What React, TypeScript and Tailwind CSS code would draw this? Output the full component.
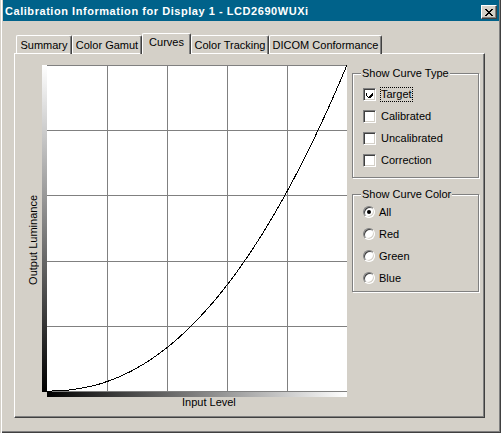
import React from 'react';

const TABS = [
  { label: 'Summary', w: 'w-[56px]' },
  { label: 'Color Gamut', w: 'w-[70px]' },
  { label: 'Curves', w: 'w-[49px]', active: true },
  { label: 'Color Tracking', w: 'w-[78px]' },
  { label: 'DICOM Conformance', w: 'w-[113px]' },
];

const CURVE_TYPES = ['Target', 'Calibrated', 'Uncalibrated', 'Correction'];
const CURVE_COLORS = ['All', 'Red', 'Green', 'Blue'];

// plot geometry inside the svg (gradient bars on left and bottom)
const PX = 5;
const PW = 300;
const PH = 326;

function curvePoints() {
  const pts: string[] = [];
  for (let i = 0; i <= 120; i++) {
    const t = i / 120;
    const x = PX + PW * t;
    const y = PH - PH * Math.pow(t, 2.2);
    pts.push(`${x.toFixed(1)},${y.toFixed(1)}`);
  }
  return pts.join(' ');
}

function Chart() {
  const cols = [1, 2, 3, 4].map((i) => PX + i * 60 + 0.5);
  const rows = [0, 1, 2, 3, 4, 5].map((i) => i * 65.2 + 0.5);
  return (
    <svg width={306} height={333} className="block">
      <defs>
        <linearGradient id="vgrad" x1="0" y1="0" x2="0" y2="1">
          <stop offset="0" stopColor="#ffffff" />
          <stop offset="1" stopColor="#000000" />
        </linearGradient>
        <linearGradient id="hgrad" x1="0" y1="0" x2="1" y2="0">
          <stop offset="0" stopColor="#000000" />
          <stop offset="1" stopColor="#ffffff" />
        </linearGradient>
      </defs>
      <rect x={0} y={0} width={PX} height={PH + 1} fill="url(#vgrad)" />
      <rect x={PX} y={0} width={PW} height={PH} fill="#ffffff" />
      <rect x={PX} y={PH} width={PW} height={6} fill="url(#hgrad)" />
      <g stroke="#808080" strokeWidth={1} shapeRendering="crispEdges">
        {cols.map((x) => (
          <line key={x} x1={x} y1={0} x2={x} y2={PH} />
        ))}
        {rows.map((y) => (
          <line key={y} x1={PX} y1={y} x2={PX + PW} y2={y} />
        ))}
      </g>
      <polyline points={curvePoints()} fill="none" stroke="#000" strokeWidth={1} shapeRendering="crispEdges" />
    </svg>
  );
}

function Group({ title, className, children }: { title: string; className: string; children: React.ReactNode }) {
  return (
    <div className={`relative w-[127px] border border-[#808080] shadow-[inset_1px_1px_0_#fff,1px_1px_0_#fff] ${className}`}>
      <span className="absolute -top-[7px] left-[8px] bg-[#d4d0c8] px-[1px] leading-[13px]">{title}</span>
      {children}
    </div>
  );
}

function Checkbox({ checked }: { checked?: boolean }) {
  return (
    <div className="flex h-[13px] w-[13px] items-center justify-center border border-t-[#808080] border-l-[#808080] border-r-white border-b-white bg-white shadow-[inset_1px_1px_0_#404040,inset_-1px_-1px_0_#d4d0c8]">
      {checked && (
        <svg width={7} height={7} viewBox="0 0 7 7" shapeRendering="crispEdges">
          <path d="M0 2h1v3h1v1h1v-1h1v-1h1v-1h1v-1h1v3h-1v1h-1v1h-1v1h-1v-1h-1v-1h-1v-1h-1z" fill="#000" />
        </svg>
      )}
    </div>
  );
}

function Radio({ checked }: { checked?: boolean }) {
  return (
    <div className="flex h-[12px] w-[12px] items-center justify-center rounded-full border border-t-[#808080] border-l-[#808080] border-r-white border-b-white bg-white shadow-[inset_1px_1px_0_#404040,inset_-1px_-1px_0_#d4d0c8]">
      {checked && <div className="h-[4px] w-[4px] rounded-full bg-black" />}
    </div>
  );
}

export default function App() {
  return (
    <div className="relative h-[433px] w-[501px] overflow-hidden bg-[#d4d0c8] pl-[3px] pr-[2px] font-['Liberation_Sans',Arial,sans-serif] text-[11px] leading-[13px] text-black shadow-[inset_1px_0_0_#d4d0c8,inset_2px_0_0_#fff,inset_-1px_-1px_0_#404040,inset_-2px_-2px_0_#808080]">
      {/* Title bar */}
      <div className="flex h-[21px] items-start justify-between bg-[#00628a] pl-[2px] pr-[2px]">
        <span className="pt-[5px] font-bold tracking-[0.55px] text-white">Calibration Information for Display 1 - LCD2690WUXi</span>
        <button className="mt-[5px] flex h-[14px] w-[16px] items-center justify-center border border-t-white border-l-white border-r-[#404040] border-b-[#404040] bg-[#d4d0c8] shadow-[inset_-1px_-1px_0_#808080]">
          <svg width={8} height={7} viewBox="0 0 8 7" shapeRendering="crispEdges">
            <path d="M0 0h2v1h1v1h2v-1h1v-1h2v1h-1v1h-1v1h-1v1h1v1h1v1h1v1h-2v-1h-1v-1h-2v1h-1v1h-2v-1h1v-1h1v-1h1v-1h-1v-1h-1v-1h-1z" fill="#000" />
          </svg>
        </button>
      </div>

      {/* Tabs */}
      <div className="ml-[13px] mt-[12px] flex h-[21px] items-end">
        {TABS.map((t) =>
          t.active ? (
            <div
              key={t.label}
              className={`relative z-10 h-[21px] ${t.w} rounded-t-[2px] border-l border-t border-r border-l-white border-t-white border-r-[#404040] bg-[#d4d0c8] pt-[2px] text-center shadow-[inset_-1px_0_0_#808080]`}
            >
              {t.label}
            </div>
          ) : (
            <div
              key={t.label}
              className={`h-[19px] ${t.w} rounded-t-[2px] border-l border-t border-r border-l-white border-t-white border-r-[#404040] pt-[3px] text-center shadow-[inset_-1px_0_0_#808080]`}
            >
              {t.label}
            </div>
          ),
        )}
      </div>

      {/* Panel */}
      <div className="-mt-px ml-[11px] h-[365px] w-[471px] border border-l-white border-t-white border-r-[#404040] border-b-[#404040] shadow-[inset_-1px_-1px_0_#808080]">
        <div className="flex items-start">
          <div className="ml-[12px] mt-[141px] rotate-180 whitespace-nowrap [writing-mode:vertical-rl]">Output Luminance</div>

          <div className="ml-[2px] mt-[11px] flex flex-col">
            <Chart />
            <div className="-mt-[2px] pl-[140px]">Input Level</div>
          </div>

          <div className="ml-[4px] mt-[19px] flex flex-col gap-[16px]">
            <Group title="Show Curve Type" className="pb-[6px] pl-[10px] pt-[9px]">
              {CURVE_TYPES.map((c, i) => (
                <div key={c} className="flex h-[22px] items-center">
                  <Checkbox checked={i === 0} />
                  <span className={`ml-[4px] border ${i === 0 ? 'border-dotted border-black' : 'border-transparent'}`}>{c}</span>
                </div>
              ))}
            </Group>
            <Group title="Show Curve Color" className="pb-[2px] pl-[10px] pt-[6px]">
              {CURVE_COLORS.map((c, i) => (
                <div key={c} className="flex h-[22px] items-center">
                  <Radio checked={i === 0} />
                  <span className="ml-[4px]">{c}</span>
                </div>
              ))}
            </Group>
          </div>
        </div>
      </div>
    </div>
  );
}
